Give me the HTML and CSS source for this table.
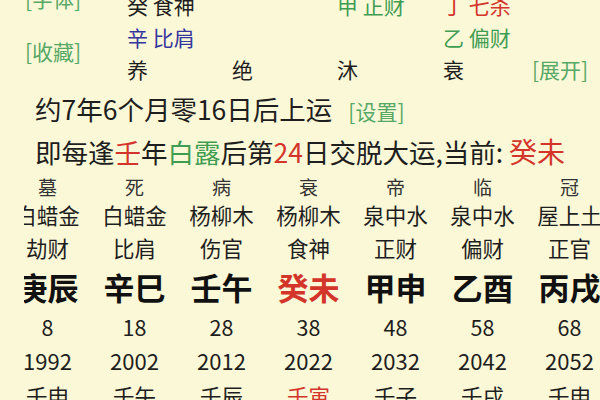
FILE: index.html
```html
<!DOCTYPE html>
<html lang="zh">
<head>
<meta charset="utf-8">
<link rel="stylesheet" href="styles.css">
</head>
<body>
<div class="page">
  <div class="top">
    <div class="labels">
      <span class="link">[字体]</span>
      <span class="link">[收藏]</span>
    </div>
    <div class="pillars">
      <span class="cell">癸 食神</span>
      <span class="cell"></span>
      <span class="cell green">甲 正财</span>
      <span class="cell red">丁 七杀</span>
      <span class="cell"></span>

      <span class="cell blue">辛 比肩</span>
      <span class="cell"></span>
      <span class="cell"></span>
      <span class="cell green">乙 偏财</span>
      <span class="cell"></span>

      <span class="cell">养</span>
      <span class="cell">绝</span>
      <span class="cell">沐</span>
      <span class="cell">衰</span>
      <span class="cell link small">[展开]</span>
    </div>
  </div>

  <p class="line1">约7年6个月零16日后上运 <span class="link set">[设置]</span></p>
  <p class="line2">即每逢<span class="red">壬</span>年<span class="green">白露</span>后第<span class="red">24</span>日交脱大运,当前: <span class="red big">癸未</span></p>

  <div class="dayun-clip">
    <div class="dayun">
      <span class="r-cs">墓</span><span class="r-cs">死</span><span class="r-cs">病</span><span class="r-cs">衰</span><span class="r-cs">帝</span><span class="r-cs">临</span><span class="r-cs">冠</span>
      <span class="r-ny">白蜡金</span><span class="r-ny">白蜡金</span><span class="r-ny">杨柳木</span><span class="r-ny">杨柳木</span><span class="r-ny">泉中水</span><span class="r-ny">泉中水</span><span class="r-ny">屋上土</span>
      <span class="r-ss">劫财</span><span class="r-ss">比肩</span><span class="r-ss">伤官</span><span class="r-ss">食神</span><span class="r-ss">正财</span><span class="r-ss">偏财</span><span class="r-ss">正官</span>
      <span class="r-gz">庚辰</span><span class="r-gz">辛巳</span><span class="r-gz">壬午</span><span class="r-gz red">癸未</span><span class="r-gz">甲申</span><span class="r-gz">乙酉</span><span class="r-gz">丙戌</span>
      <span class="r-age">8</span><span class="r-age">18</span><span class="r-age">28</span><span class="r-age">38</span><span class="r-age">48</span><span class="r-age">58</span><span class="r-age">68</span>
      <span class="r-yr">1992</span><span class="r-yr">2002</span><span class="r-yr">2012</span><span class="r-yr">2022</span><span class="r-yr">2032</span><span class="r-yr">2042</span><span class="r-yr">2052</span>
      <span class="r-ln">壬申</span><span class="r-ln">壬午</span><span class="r-ln">壬辰</span><span class="r-ln red">壬寅</span><span class="r-ln">壬子</span><span class="r-ln">壬戌</span><span class="r-ln">壬申</span>
    </div>
  </div>
</div>
</body>
</html>
```

FILE: styles.css
```css
html, body {
  margin: 0;
  padding: 0;
  background: #fbf8d8;
  overflow: hidden;
}
body {
  width: 600px;
  height: 400px;
  font-family: "Noto Sans CJK SC", "Noto Sans", sans-serif;
  color: #1e1e1e;
}
.page {
  width: 600px;
  height: 400px;
  overflow: hidden;
}
.top {
  display: flex;
  margin-top: -14px;
  padding-left: 25px;
}
.labels {
  width: 102px;
  display: flex;
  flex-direction: column;
  gap: 29px;
}
.link {
  color: #56a865;
  font-size: 21px;
  line-height: 24px;
}
.pillars {
  padding-top: 3px;
  display: grid;
  grid-template-columns: 105px 105px 106px 89px auto;
  grid-auto-rows: 32px;
  font-size: 21px;
  line-height: 32px;
}
.cell { white-space: nowrap; }
.cell.small { font-size: 21px; line-height: 32px; }
.green { color: #3f9d52; }
.red { color: #d4352b; }
.blue { color: #35359e; }

.line1 {
  margin: 7px 0 0 35px;
  font-size: 26.5px;
  line-height: 34px;
  white-space: nowrap;
}
.line1 .set {
  font-size: 21px;
  margin-left: 10px;
}
.line2 {
  margin: 5px 0 0 35px;
  font-size: 26.5px;
  line-height: 40px;
  white-space: nowrap;
}
.line2 .big { font-size: 28px; }

.dayun-clip {
  margin-left: 24px;
  overflow: hidden;
}
.dayun {
  margin-left: -20px;
  display: grid;
  grid-template-columns: repeat(7, 87px);
  width: 609px;
  text-align: center;
  white-space: nowrap;
}
.r-cs { font-size: 19px; line-height: 30px; color: #333; }
.r-ny { font-size: 21.5px; line-height: 26px; }
.r-ss { font-size: 21.5px; line-height: 40px; }
.r-gz { font-size: 31px; line-height: 38px; font-weight: 700; color: #111; }
.r-gz.red { color: #d4352b; }
.r-age { font-size: 21.5px; line-height: 42px; }
.r-yr { font-size: 22px; line-height: 24px; }
.r-ln { font-size: 21.5px; line-height: 48px; }
.r-ln.red { color: #d4352b; }
```
